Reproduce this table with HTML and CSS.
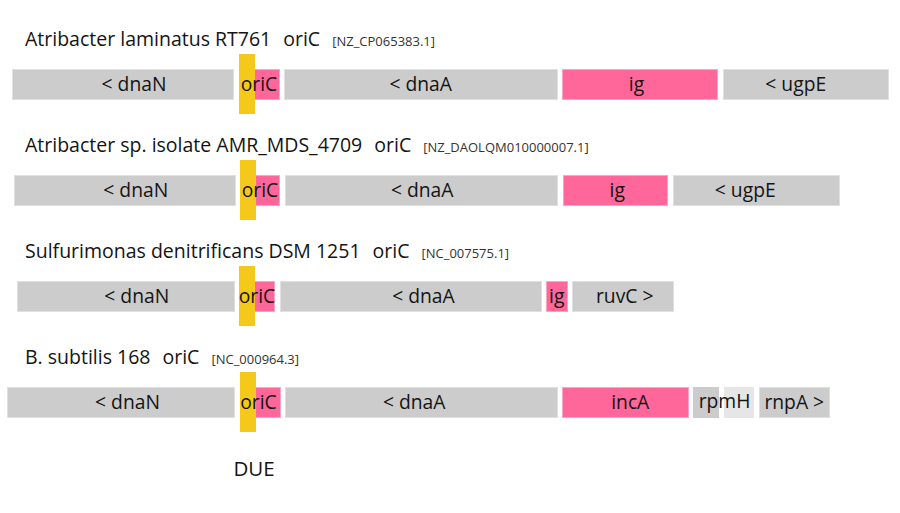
FILE: index.html
```html
<!DOCTYPE html>
<html lang="en">
<head>
<meta charset="utf-8">
<title>oriC regions</title>
<link rel="stylesheet" href="styles.css">
</head>
<body>
<main class="page">
  <section class="locus">
    <h2 class="locus-title"><span class="org">Atribacter laminatus RT761</span><span class="tag">oriC</span><span class="acc">[NZ_CP065383.1]</span></h2>
    <div class="track" style="margin-left:12px">
      <div class="gene" style="width:222px;--dx:11px"><span class="lbl">&lt; dnaN</span></div>
      <div class="gene ori" style="width:41px"><span class="lbl">oriC</span></div>
      <div class="gene" style="width:273.5px"><span class="lbl">&lt; dnaA</span></div>
      <div class="gene pink" style="width:156px;--dx:-3.5px"><span class="lbl">ig</span></div>
      <div class="gene" style="width:166.5px;--dx:-10px"><span class="lbl">&lt; ugpE</span></div>
    </div>
  </section>

  <section class="locus">
    <h2 class="locus-title"><span class="org">Atribacter sp. isolate AMR_MDS_4709</span><span class="tag">oriC</span><span class="acc">[NZ_DAOLQM010000007.1]</span></h2>
    <div class="track" style="margin-left:14px">
      <div class="gene" style="width:221.5px;--dx:11px"><span class="lbl">&lt; dnaN</span></div>
      <div class="gene ori" style="width:40px"><span class="lbl">oriC</span></div>
      <div class="gene" style="width:273.5px;--dx:1px"><span class="lbl">&lt; dnaA</span></div>
      <div class="gene pink" style="width:105.5px;--dx:2px"><span class="lbl">ig</span></div>
      <div class="gene" style="width:167.5px;--dx:-11px"><span class="lbl">&lt; ugpE</span></div>
    </div>
  </section>

  <section class="locus">
    <h2 class="locus-title"><span class="org">Sulfurimonas denitrificans DSM 1251</span><span class="tag">oriC</span><span class="acc">[NC_007575.1]</span></h2>
    <div class="track" style="margin-left:17px">
      <div class="gene" style="width:217.5px;--dx:11px"><span class="lbl">&lt; dnaN</span></div>
      <div class="gene ori" style="width:36px"><span class="lbl">oriC</span></div>
      <div class="gene" style="width:262px;--dx:13px"><span class="lbl">&lt; dnaA</span></div>
      <div class="gene pink" style="width:21.5px"><span class="lbl">ig</span></div>
      <div class="gene" style="width:101.5px;--dx:2px"><span class="lbl">ruvC &gt;</span></div>
    </div>
  </section>

  <section class="locus">
    <h2 class="locus-title"><span class="org">B. subtilis 168</span><span class="tag">oriC</span><span class="acc">[NC_000964.3]</span></h2>
    <div class="track" style="margin-left:7px">
      <div class="gene" style="width:228px;--dx:6.5px"><span class="lbl">&lt; dnaN</span></div>
      <div class="gene ori" style="width:41px;--dx:-1.5px"><span class="lbl">oriC</span></div>
      <div class="gene" style="width:272.5px;--dx:-7px"><span class="lbl">&lt; dnaA</span></div>
      <div class="gene pink" style="width:126.5px;--dx:5px"><span class="lbl">incA</span></div>
      <div class="gene split" style="width:61px;--dx:1px"><span class="lbl">rpmH</span></div>
      <div class="gene" style="width:71.5px"><span class="lbl">rnpA &gt;</span></div>
    </div>
  </section>

  <div class="due">DUE</div>
</main>
</body>
</html>
```

FILE: styles.css
```css
html, body {
  margin: 0;
  padding: 0;
  background: #ffffff;
}

body {
  font-family: "Open Sans", "Noto Sans", "Liberation Sans", sans-serif;
  color: #141414;
}

.page {
  padding-top: 27px;
  width: 900px;
  height: 513px;
  box-sizing: border-box;
}

.locus {
  margin-bottom: 33px;
}

.locus-title {
  margin: 0 0 0 25px;
  height: 24px;
  font-size: 19.5px;
  line-height: 24px;
  font-weight: 400;
  white-space: nowrap;
}

.tag {
  margin-left: 12px;
}

.acc {
  margin-left: 12px;
  font-size: 13px;
  color: #333333;
}

.track {
  display: flex;
  gap: 4.5px;
  margin-top: 18px;
  height: 31px;
}

.gene {
  flex: none;
  box-sizing: border-box;
  height: 31px;
  background: #cccccc;
  border: 1px solid rgba(255, 255, 255, 0.4);
  display: flex;
  justify-content: center;
  align-items: flex-start;
  font-size: 19.3px;
  line-height: 27px;
  white-space: nowrap;
}

.lbl {
  display: block;
  transform: translateX(var(--dx, 0px));
}

.pink {
  background: #ff6699;
}

.ori {
  position: relative;
  background: #ff6699;
}

.ori::before {
  content: "";
  position: absolute;
  left: -1px;
  top: -16px;
  bottom: -15px;
  width: 16px;
  background: #f5c81c;
}

.ori .lbl {
  position: relative;
}

.split {
  border: none;
  background: linear-gradient(to right, #cccccc 0 25.5px, #ffffff 25.5px 30.5px, #e6e6e6 30.5px 100%);
}

.due {
  width: 80px;
  margin-left: 214px;
  margin-top: 38px;
  text-align: center;
  font-size: 20.5px;
  line-height: 24px;
}
```
